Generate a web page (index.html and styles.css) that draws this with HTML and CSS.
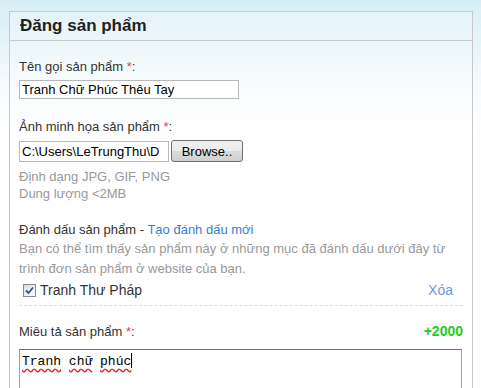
FILE: index.html
```html
<!DOCTYPE html>
<html lang="vi">
<head>
  <meta charset="UTF-8" />
  <title>Đăng sản phẩm</title>
  <link rel="stylesheet" href="styles.css">
</head>
<body>

  <div class="panel">
    <h2 class="panel-title">Đăng sản phẩm</h2>

    <div class="panel-body">
      <!-- Ten san pham -->
      <div class="field">
        <label class="label">Tên gọi sản phẩm <span class="req">*</span>:</label>
        <input class="text-input" type="text" value="Tranh Chữ Phúc Thêu Tay">
      </div>

      <!-- Anh minh hoa -->
      <div class="field">
        <label class="label">Ảnh minh họa sản phẩm <span class="req">*</span>:</label>
        <div class="file-row">
          <span class="file-path">C:\Users\LeTrungThu\D</span>
          <button class="browse">Browse..</button>
        </div>
        <p class="hint">Định dạng JPG, GIF, PNG<br>Dung lượng &lt;2MB</p>
      </div>

      <!-- Danh dau -->
      <div class="field tags">
        <label class="label">Đánh dấu sản phẩm - <a class="link" href="#">Tạo đánh dấu mới</a></label>
        <p class="desc">Bạn có thể tìm thấy sản phẩm này ở những mục đã đánh dấu dưới đây từ trình đơn sản phẩm ở website của bạn.</p>
        <div class="tag-row">
          <label class="tag">
            <span class="check">
              <svg width="9" height="9" viewBox="0 0 9 9"><path d="M1 4.5 L3.5 7 L8 1.5" fill="none" stroke="#2c4fa0" stroke-width="1.8"/></svg>
            </span>
            Tranh Thư Pháp
          </label>
          <a class="link" href="#">Xóa</a>
        </div>
      </div>

      <!-- Mieu ta -->
      <div class="field">
        <div class="label-row">
          <label class="label">Miêu tả sản phẩm <span class="req">*</span>:</label>
          <span class="count">+2000</span>
        </div>
        <div class="textarea"><span class="typo">Tranh</span> <span class="typo">chữ</span> <span class="typo">phúc</span><span class="caret"></span></div>
      </div>
    </div>
  </div>

</body>
</html>
```

FILE: styles.css
```css
body {
  font-family: 'Liberation Sans', Arial, sans-serif;
  font-size: 13px;
  color: #333;
  margin: 0;
  padding: 11px 9px 0 9px;
  background: linear-gradient(#d6edf5 0px, #e6f4f9 40px, #f7fbfd 90px, #ffffff 140px);
  height: 377px;
  overflow: hidden;
}

.panel {
  width: 462px;
  border: 1px solid #c8c8c8;
  border-bottom: none;
  background: rgba(255, 255, 255, 0.25);
}

.panel-title {
  margin: 0;
  height: 28px;
  line-height: 28px;
  padding-left: 10px;
  font-size: 17px;
  font-weight: bold;
  color: #222;
  border-bottom: 1px solid #c8c8c8;
}

.panel-body {
  padding: 18px 9px 0 9px;
}

.field {
  margin-bottom: 20px;
}

.label {
  display: block;
  line-height: 15px;
  color: #333;
  margin-bottom: 6px;
}

.req { color: #e04040; }

.text-input {
  display: block;
  box-sizing: border-box;
  width: 220px;
  height: 19px;
  margin: 0;
  padding: 0 2px;
  border: 1px solid #b8b8b8;
  font-family: 'Liberation Sans', Arial, sans-serif;
  font-size: 13px;
  color: #000;
  background: #fff;
}

.file-row {
  display: flex;
  align-items: center;
  gap: 2px;
}

.file-path {
  box-sizing: border-box;
  width: 150px;
  height: 21px;
  line-height: 19px;
  padding: 0 2px;
  border: 1px solid #b8b8b8;
  background: #fff;
  color: #000;
  overflow: hidden;
  white-space: nowrap;
}

.browse {
  height: 22px;
  width: 72px;
  padding: 0;
  border: 1px solid #707070;
  border-radius: 3px;
  background: linear-gradient(#f2f2f2, #ebebeb 50%, #dddddd 50%, #cfcfcf);
  font-family: 'Liberation Sans', Arial, sans-serif;
  font-size: 13px;
  color: #000;
}

.hint {
  margin: 6px 0 0;
  line-height: 17px;
  color: #999;
}

.link {
  color: #3a80d0;
  text-decoration: none;
}

.tags .label {
  margin-bottom: 0;
}

.desc {
  margin: 2px 0 0;
  line-height: 20px;
  color: #999;
}

.tag-row {
  display: flex;
  justify-content: space-between;
  align-items: center;
  padding: 3px 10px 7px 4px;
  border-bottom: 1px dashed #dcdcdc;
  margin-bottom: -3px;
}

.tag {
  display: flex;
  align-items: center;
  gap: 4px;
  color: #333;
  font-size: 14px;
}

.check {
  box-sizing: border-box;
  width: 13px;
  height: 13px;
  border: 1px solid #8a8a8a;
  background: linear-gradient(135deg, #dcdcdc, #ffffff);
  display: flex;
  align-items: center;
  justify-content: center;
}

.tag-row .link {
  font-size: 14px;
  color: #6a9ad6;
}

.label-row {
  display: flex;
  justify-content: space-between;
  align-items: baseline;
  margin-bottom: 10px;
}

.label-row .label {
  margin-bottom: 0;
}

.count {
  color: #22cc22;
  font-size: 14px;
  font-weight: bold;
}

.textarea {
  width: 437px;
  height: 60px;
  padding: 3px 2px;
  border: 1px solid #7aa7cf;
  border-top-color: #3d7bad;
  background: #fff;
  font-family: 'Liberation Mono', 'Courier New', monospace;
  font-size: 13px;
  color: #000;
}

.typo {
  text-decoration: underline wavy #e02020;
  text-underline-offset: 3px;
}

.caret {
  display: inline-block;
  width: 1px;
  height: 15px;
  background: #000;
  vertical-align: -3px;
}
```
